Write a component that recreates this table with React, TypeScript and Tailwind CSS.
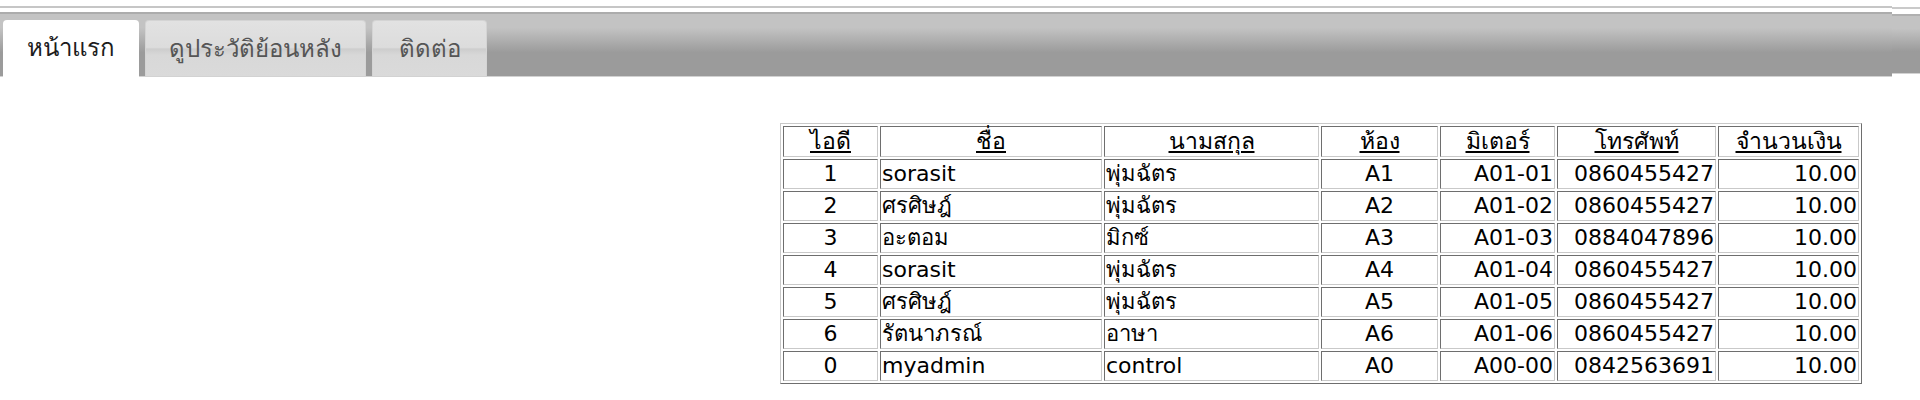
import React from 'react';

type Row = {
  id: string;
  name: string;
  surname: string;
  room: string;
  meter: string;
  phone: string;
  amount: string;
};

const rows: Row[] = [
  { id: '1', name: 'sorasit', surname: 'พุ่มฉัตร', room: 'A1', meter: 'A01-01', phone: '0860455427', amount: '10.00' },
  { id: '2', name: 'ศรศิษฎ์', surname: 'พุ่มฉัตร', room: 'A2', meter: 'A01-02', phone: '0860455427', amount: '10.00' },
  { id: '3', name: 'อะตอม', surname: 'มิกซ์', room: 'A3', meter: 'A01-03', phone: '0884047896', amount: '10.00' },
  { id: '4', name: 'sorasit', surname: 'พุ่มฉัตร', room: 'A4', meter: 'A01-04', phone: '0860455427', amount: '10.00' },
  { id: '5', name: 'ศรศิษฎ์', surname: 'พุ่มฉัตร', room: 'A5', meter: 'A01-05', phone: '0860455427', amount: '10.00' },
  { id: '6', name: 'รัตนาภรณ์', surname: 'อาษา', room: 'A6', meter: 'A01-06', phone: '0860455427', amount: '10.00' },
  { id: '0', name: 'myadmin', surname: 'control', room: 'A0', meter: 'A00-00', phone: '0842563691', amount: '10.00' },
];

const headers = [
  { label: 'ไอดี', w: 'w-[95px]' },
  { label: 'ชื่อ', w: 'w-[222px]' },
  { label: 'นามสกุล', w: 'w-[215px]' },
  { label: 'ห้อง', w: 'w-[117px]' },
  { label: 'มิเตอร์', w: 'w-[115px]' },
  { label: 'โทรศัพท์', w: 'w-[159px]' },
  { label: 'จำนวนเงิน', w: 'w-[141px]' },
];

const cell =
  'h-[30px] border border-t-[#6e6e6e] border-l-[#6e6e6e] border-b-[#c9c9c9] border-r-[#c9c9c9] px-px py-px leading-[26px] whitespace-nowrap';

const Tabs: React.FC = () => {
  const tabs = [
    { label: 'หน้าแรก', w: 'w-[136px]', active: true },
    { label: 'ดูประวัติย้อนหลัง', w: 'w-[221px]', active: false },
    { label: 'ติดต่อ', w: 'w-[115px]', active: false },
  ];

  return (
    <div className="flex">
      <div className="w-[1892px] shrink-0 pt-[6px]">
        <div className="h-[2px] bg-[#c6c6c6]" />
        <div className="mt-[4px] flex h-[65px] items-end gap-[6px] border-t-2 border-b border-t-[#acacac] border-b-[#d2d2d2] bg-[linear-gradient(to_bottom,#c3c3c3_22%,#9b9b9b_62%)] pl-[3px]">
          {tabs.map((t) =>
            t.active ? (
              <div
                key={t.label}
                className={`${t.w} relative -mb-px flex h-[57px] items-center justify-center rounded-t-[4px] bg-white pb-px text-[24px] text-[#1c1c1c]`}
              >
                {t.label}
              </div>
            ) : (
              <div
                key={t.label}
                className={`${t.w} flex h-[56px] items-center justify-center rounded-t-[4px] border border-b-0 border-[#d4d4d4] bg-[linear-gradient(to_bottom,#e2e2e2_0%,#dcdcdc_48%,#cdcdcd_51%,#d8d8d8_62%,#dadada_100%)] text-[24px] text-[#555]`}
              >
                {t.label}
              </div>
            ),
          )}
        </div>
      </div>
      <div className="flex-1 pt-[7px]">
        <div className="h-[2px] bg-[#cacaca]" />
        <div className="mt-[5px] h-[60px] border-t-2 border-b border-t-[#b0b0b0] border-b-[#d2d2d2] bg-[linear-gradient(to_bottom,#c3c3c3_22%,#9b9b9b_62%)]" />
      </div>
    </div>
  );
};

const App: React.FC = () => {
  return (
    <div className="min-h-[400px] bg-white font-['DejaVu_Sans','Noto_Sans',sans-serif] text-black">
      <Tabs />

      <div className="mt-[46px] flex justify-end pr-[58px]">
        <table className="w-[1082px] table-fixed border-separate border-spacing-[2px] border border-t-[#c9c9c9] border-l-[#c9c9c9] border-b-[#6e6e6e] border-r-[#6e6e6e] text-[22px]">
          <thead>
            <tr>
              {headers.map((h) => (
                <th key={h.label} className={`${h.w} ${cell} text-center font-normal`}>
                  <a href="#" className="text-[23px] underline">
                    {h.label}
                  </a>
                </th>
              ))}
            </tr>
          </thead>
          <tbody>
            {rows.map((r) => (
              <tr key={r.id}>
                <td className={`${cell} text-center`}>{r.id}</td>
                <td className={`${cell} text-left`}>{r.name}</td>
                <td className={`${cell} text-left`}>{r.surname}</td>
                <td className={`${cell} text-center`}>{r.room}</td>
                <td className={`${cell} text-right`}>{r.meter}</td>
                <td className={`${cell} text-right`}>{r.phone}</td>
                <td className={`${cell} text-right`}>{r.amount}</td>
              </tr>
            ))}
          </tbody>
        </table>
      </div>
    </div>
  );
};

export default App;
